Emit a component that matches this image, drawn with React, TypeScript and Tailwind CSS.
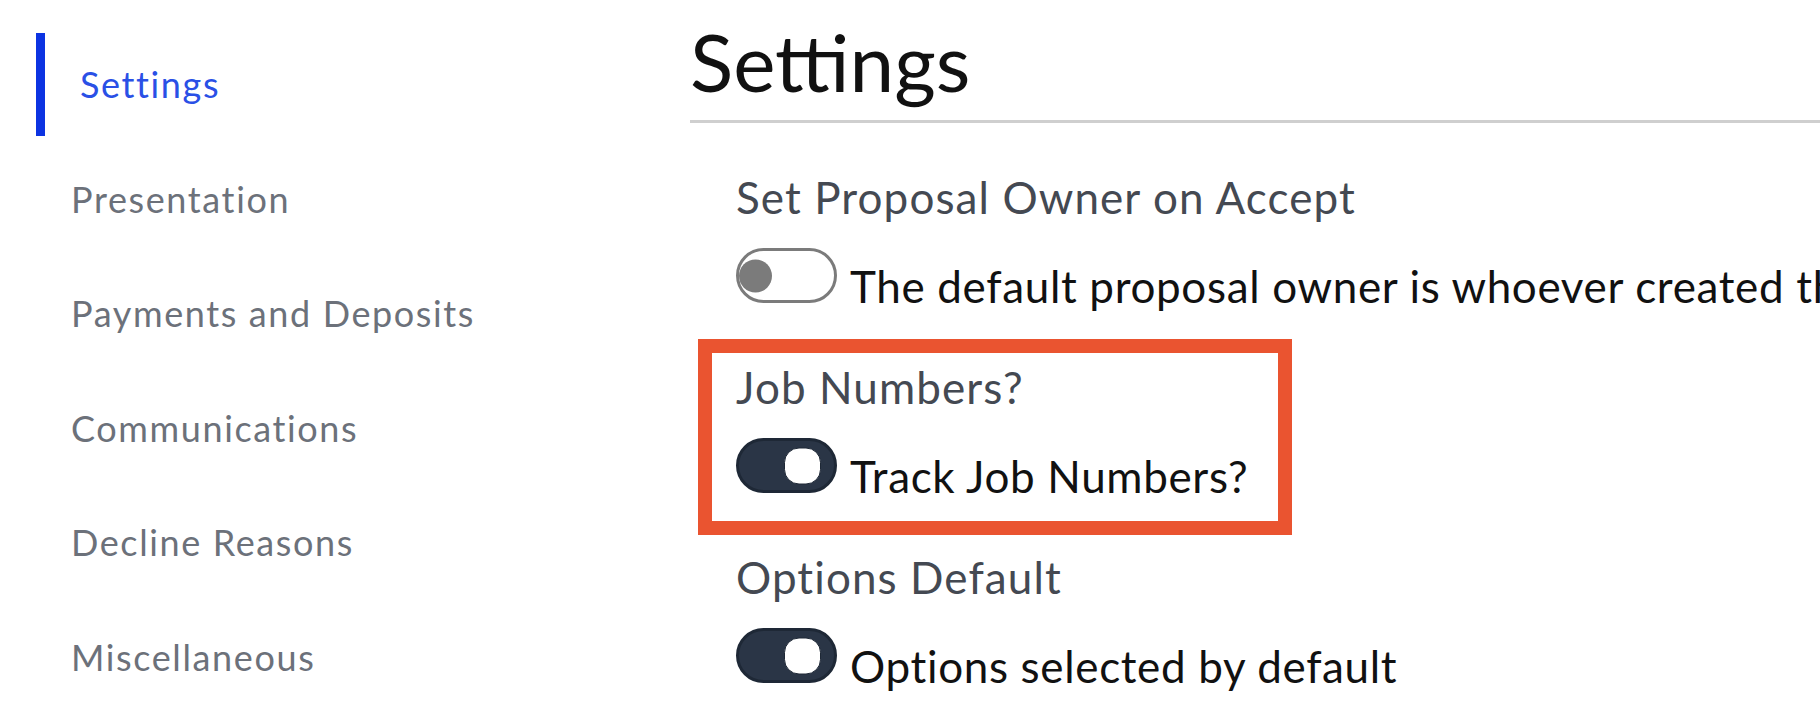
import React from "react";

const navItems = [
  "Settings",
  "Presentation",
  "Payments and Deposits",
  "Communications",
  "Decline Reasons",
  "Miscellaneous",
];

function Toggle({ on }: { on: boolean }) {
  if (on) {
    return (
      <div className="relative h-[55px] w-[101px] shrink-0 rounded-full border-[3px] border-[#1e2836] bg-[#2a3546]">
        <div className="absolute left-[45px] top-1/2 h-[37px] w-[37px] -translate-y-1/2 rounded-[15px] border border-[#1e2836] bg-white" />
      </div>
    );
  }
  return (
    <div className="relative h-[55px] w-[101px] shrink-0 rounded-full border-[3px] border-[#7b7b7b] bg-white">
      <div className="absolute left-0 top-1/2 h-[33px] w-[33px] -translate-y-1/2 rounded-full bg-[#7b7b7b]" />
    </div>
  );
}

function Setting({
  label,
  text,
  on,
}: {
  label: string;
  text: string;
  on: boolean;
}) {
  return (
    <div className="flex flex-col">
      <div className="-mt-[1px] whitespace-nowrap text-[44px] leading-none tracking-[0.025em] text-[#444952]">
        {label}
      </div>
      <div className="mt-[29px] flex items-end gap-[13px]">
        <Toggle on={on} />
        <span className="-mb-[5px] whitespace-nowrap text-[44px] leading-none tracking-[0.015em] text-[#111111]">
          {text}
        </span>
      </div>
    </div>
  );
}

export default function App() {
  return (
    <div
      className="flex h-[720px] w-[1820px] overflow-hidden bg-white"
      style={{ fontFamily: "Lato, 'Open Sans', sans-serif" }}
    >
      <aside className="flex w-[690px] shrink-0 flex-col pl-[36px] pt-[27px]">
        {navItems.map((item, i) => (
          <div key={item} className="flex h-[114.5px] items-center">
            <div
              className={
                i === 0
                  ? "h-[103px] w-[9px] bg-[#0c33e2]"
                  : "h-[103px] w-[9px] bg-transparent"
              }
            />
            <span
              className={
                i === 0
                  ? "ml-[35px] text-[36px] leading-none tracking-[0.045em] text-[#2a50e6]"
                  : "ml-[26px] text-[36px] leading-none tracking-[0.045em] text-[#6c717a]"
              }
            >
              {item}
            </span>
          </div>
        ))}
      </aside>

      <main className="flex min-w-0 flex-1 flex-col pt-[21px]">
        <h1 className="text-[80px] font-normal leading-none text-[#111111]">
          Settings
        </h1>
        <div className="mt-[19px] h-[3px] w-full bg-[#cfcfcf]" />

        <div className="mt-[53px] pl-[46px]">
          <Setting
            label="Set Proposal Owner on Accept"
            text="The default proposal owner is whoever created the proposal. Enable to set the owner to the user who accepts it."
            on={false}
          />
        </div>

        <div className="ml-[8px] mt-[36px] w-[594px] border-[14px] border-[#ea5430] pb-[28px] pl-[24px] pt-[13px]">
          <Setting label="Job Numbers?" text="Track Job Numbers?" on={true} />
        </div>

        <div className="mt-[21px] pl-[46px]">
          <Setting
            label="Options Default"
            text="Options selected by default"
            on={true}
          />
        </div>
      </main>
    </div>
  );
}
